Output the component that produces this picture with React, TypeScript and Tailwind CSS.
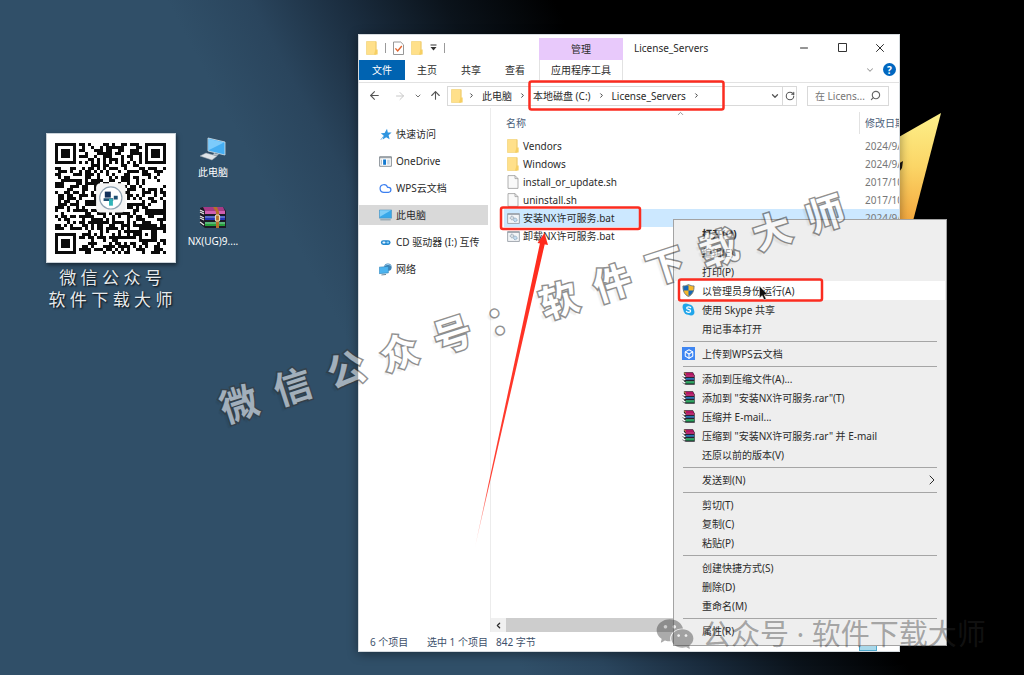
import type { ReactNode } from "react";
import {
  ArrowLeft, ArrowRight, ArrowUp, Box, ChevronDown, ChevronLeft,
  ChevronRight, ChevronUp, Cloud, Minus, RotateCw, Search, Square, X,
} from "lucide-react";
import { AiFillWechat } from "react-icons/ai";

const QR_SIZE = 37;

function inFinder(x: number, y: number, ox: number, oy: number) {
  return x >= ox - 1 && x <= ox + 7 && y >= oy - 1 && y <= oy + 7;
}

function ring(x: number, y: number, cx: number, cy: number) {
  return Math.max(Math.abs(x - cx), Math.abs(y - cy));
}

function isDark(x: number, y: number) {
  for (const [ox, oy] of [[0, 0], [30, 0], [0, 30]]) {
    if (inFinder(x, y, ox, oy)) {
      const r = ring(x, y, ox + 3, oy + 3);
      return r === 3 || r <= 1;
    }
  }
  const a = ring(x, y, 30, 30);
  if (a <= 2) return a !== 1;
  if (x === 6 || y === 6) return (x + y) % 2 === 0;
  let h = (x * 374761393 + y * 668265263 + 97) | 0;
  h = Math.imul(h ^ (h >>> 13), 1274126177);
  return ((h ^ (h >>> 16)) & 255) < 136;
}

function QrCode() {
  let d = "";
  for (let y = 0; y < QR_SIZE; y++)
    for (let x = 0; x < QR_SIZE; x++) if (isDark(x, y)) d += `M${x} ${y}h1v1h-1z`;
  return (
    <svg viewBox="0 0 37 37" className="w-[111px] h-[111px]" role="img" aria-label="二维码">
      <path d={d} fill="#0b0b0b" shapeRendering="crispEdges" />
      <rect x="13.7" y="13.4" width="9.8" height="9.8" rx="1.4" fill="#f4f4f4" />
      <circle cx="18.6" cy="18.3" r="3.7" fill="#fff" stroke="#8fa3b3" strokeWidth=".4" />
      <path d="M16.6 16.2h2v2h-2z" fill="#12305a" />
      <path d="M16.2 18.4h3.2v.9h-3.2zM19.6 17.6h1.3v1.2h-1.3z" fill="#1f4f73" />
      <path d="M18 18.6h1.3v2.3H18z" fill="#33b5b8" />
    </svg>
  );
}

function FolderIcon() {
  return (
    <svg viewBox="0 0 12 14" className="w-3 h-[14px] shrink-0">
      <path d="M.5.5h9.6v13H.5z" fill="#ffe08a" stroke="#f0cf6c" strokeWidth=".6" />
      <path d="M9.4 8.5h2.2v5H8z" fill="#f6cf63" />
      <path d="M10 .8v8" stroke="#e9c765" strokeWidth=".7" />
    </svg>
  );
}

function FileIcon() {
  return (
    <svg viewBox="0 0 12 14" className="w-3 h-[14px] shrink-0">
      <path d="M1 .6h7l3 3v9.8H1z" fill="#f9f9f9" stroke="#9c9c9c" strokeWidth=".8" />
      <path d="M8 .6v3h3" fill="none" stroke="#9c9c9c" strokeWidth=".8" />
    </svg>
  );
}

function BatIcon() {
  return (
    <svg viewBox="0 0 14 12" className="w-[13px] h-[11px] shrink-0">
      <path d="M.6.6h12.8v10.8H.6z" fill="#f3f5f7" stroke="#9098a0" strokeWidth=".9" />
      <path d="M.6 1.6h12.8" stroke="#9098a0" strokeWidth=".9" />
      <circle cx="5.4" cy="5.4" r="2" fill="#d6dde3" stroke="#8496a6" strokeDasharray="1 .5" />
      <circle cx="9" cy="7.6" r="1.9" fill="#c5ddf0" stroke="#7b9ab5" strokeDasharray="1 .5" />
    </svg>
  );
}

function CheckDocIcon() {
  return (
    <svg viewBox="0 0 11 14" className="w-[11px] h-[14px]">
      <path d="M.5 1h7.2l2.8 2.8v9.7H.5z" fill="#fff" stroke="#8b8b8b" strokeWidth=".9" />
      <path d="M2.4 7.4l2.3 2.5L8.8 5" fill="none" stroke="#e2632d" strokeWidth="1.4" />
    </svg>
  );
}

function StarIcon() {
  return (
    <svg viewBox="0 0 13 13" className="w-[13px] h-[13px]">
      <path d="M8 .8l.8 3.600 3.800.2-3 2.600 1 4-3.400-2-3.500 2.300.9-4-2.800-2.200 3.800-.4z" fill="#2f95e0" />
      <path d="M4.4 8.4l-2.6 3.4" stroke="#79b9e8" strokeWidth="1" />
    </svg>
  );
}

function OneDriveIcon() {
  return (
    <svg viewBox="0 0 14 12" className="w-[13px] h-[11px]">
      <path d="M.6.8h12.8v10.4H.6z" fill="#fff" stroke="#7d858c" />
      <path d="M.6 1.9h12.8" stroke="#7d858c" />
      <path d="M4.4 3.8h3.2v5.8H4.4z" fill="#1379cf" />
      <path d="M8.8 4h2.8v5.4H8.8z" fill="#c4d3df" />
      <path d="M2 4h1.2v5.4H2z" fill="#b9c4cc" />
    </svg>
  );
}

function MonitorIcon() {
  return (
    <svg viewBox="0 0 14 12" className="w-[13px] h-[12px]">
      <path d="M.4.6h13.2v8.8H.4z" fill="#38a8ea" stroke="#4a8fb8" strokeWidth=".6" />
      <path d="M1 1h12L1 8z" fill="#7fcdf7" />
      <path d="M1.4 11.2h11.2" stroke="#7690a0" strokeWidth="1" />
    </svg>
  );
}

function CdIcon() {
  return (
    <svg viewBox="0 0 14 12" className="w-[13px] h-[11px]">
      <rect x="2" y="3.6" width="10.5" height="5" rx="2.5" fill="#2187cf" />
      <rect x="3.6" y="5" width="3.4" height="2.2" rx="1.1" fill="#e8f5ff" />
      <rect x="8" y="5" width="3" height="2.2" rx="1.1" fill="#8fd0f8" />
    </svg>
  );
}

function NetworkIcon() {
  return (
    <svg viewBox="0 0 14 14" className="w-[14px] h-[14px]">
      <circle cx="9.6" cy="5" r="4" fill="#3f83b5" />
      <path d="M6.8 3.2c2-1.6 4-1.4 5.8.2" stroke="#a5d3ef" fill="none" />
      <path d="M.3 5l9.800-.8v7L.3 12z" fill="#4cb4f0" stroke="#2f7fb2" strokeWidth=".6" />
      <path d="M2.6 13.400l5-.5" stroke="#5d7a8e" strokeWidth="1" />
    </svg>
  );
}

function RarIcon() {
  return (
    <svg viewBox="0 0 14 14" className="w-[13px] h-[13px]">
      <path d="M2 .4h9.800l1.900 3.400v9.800H3.800L2 12z" fill="#26222c" />
      <path d="M2.400.8h9l1.400 2.400H4.200z" fill="#b31563" />
      <path d="M4 3.4h9.200v1.800H4z" fill="#d4307f" />
      <path d="M4 6.400h9.200v2H4z" fill="#2c74b5" />
      <path d="M4 10h9.200v2.400H4z" fill="#1d9b52" />
      <path d="M4 10.600h9.200" stroke="#7fe0a8" strokeWidth=".5" />
      <path d="M.6 3.400l3 1.800M.6 6.600l3 1.800M.6 10l3 2" stroke="#fff" strokeWidth="1.500" />
      <path d="M.4 4.800l2.600 1.500M.4 8l2.600 1.500M.4 11.400l2.600 1.700" stroke="#55555c" strokeWidth=".7" />
      <path d="M2.4 1l1.8 1.6" stroke="#e7c93a" strokeWidth="1" />
    </svg>
  );
}

function ShieldIcon() {
  return (
    <svg viewBox="0 0 14 14" className="w-[13px] h-[13px]">
      <path d="M7 .5c2 1.2 4 1.6 6 1.6 0 5.600-1.500 9.300-6 11.400C2.500 11.400 1 7.700 1 2.100c2 0 4-.4 6-1.600z" fill="#f6b828" stroke="#5f6e7c" strokeWidth=".9" />
      <path d="M7 1.300v5.700H1.600C1.400 5.400 1.400 4 1.400 2.500c2 0 3.800-.4 5.600-1.200zM7 7h5.200c-.8 2.700-2.300 4.700-5.200 6z" fill="#1767b8" />
    </svg>
  );
}

function SkypeIcon() {
  return (
    <svg viewBox="0 0 14 14" className="w-[13px] h-[13px]">
      <circle cx="7" cy="7" r="5.600" fill="#20a5ea" />
      <circle cx="4.200" cy="4.200" r="3.600" fill="#20a5ea" />
      <circle cx="9.800" cy="9.800" r="3.600" fill="#20a5ea" />
      <path d="M9.300 5C8.700 3.800 5 3.600 5 5.400 5 7.400 9.300 6.400 9.300 8.600 9.300 10.500 5.200 10.400 4.700 8.900" fill="none" stroke="#fff" strokeWidth="1.300" strokeLinecap="round" />
    </svg>
  );
}

function WpsBoxIcon() {
  return (
    <span className="flex items-center justify-center w-[13px] h-[13px] bg-[#3f86f2]">
      <Box size={10} color="#fff" strokeWidth={2.5} />
    </span>
  );
}

type MenuEntry = { label: string; icon?: ReactNode; bold?: boolean; active?: boolean; sub?: boolean };

const MENU_GROUPS: MenuEntry[][] = [
  [
    { label: "打开(O)", bold: true },
    { label: "编辑(E)" },
    { label: "打印(P)" },
    { label: "以管理员身份运行(A)", icon: <ShieldIcon />, active: true },
    { label: "使用 Skype 共享", icon: <SkypeIcon /> },
    { label: "用记事本打开" },
  ],
  [{ label: "上传到WPS云文档", icon: <WpsBoxIcon /> }],
  [
    { label: "添加到压缩文件(A)...", icon: <RarIcon /> },
    { label: '添加到 "安装NX许可服务.rar"(T)', icon: <RarIcon /> },
    { label: "压缩并 E-mail...", icon: <RarIcon /> },
    { label: '压缩到 "安装NX许可服务.rar" 并 E-mail', icon: <RarIcon /> },
    { label: "还原以前的版本(V)" },
  ],
  [{ label: "发送到(N)", sub: true }],
  [{ label: "剪切(T)" }, { label: "复制(C)" }, { label: "粘贴(P)" }],
  [{ label: "创建快捷方式(S)" }, { label: "删除(D)" }, { label: "重命名(M)" }],
  [{ label: "属性(R)" }],
];

const SIDEBAR = [
  { label: "快速访问", icon: <StarIcon /> },
  { label: "OneDrive", icon: <OneDriveIcon /> },
  { label: "WPS云文档", icon: <Cloud size={13} color="#3b7ff0" strokeWidth={2.2} /> },
  { label: "此电脑", icon: <MonitorIcon />, active: true },
  { label: "CD 驱动器 (I:) 互传", icon: <CdIcon /> },
  { label: "网络", icon: <NetworkIcon /> },
];

const FILES = [
  { name: "Vendors", date: "2024/9/10", icon: <FolderIcon /> },
  { name: "Windows", date: "2024/9/10", icon: <FolderIcon /> },
  { name: "install_or_update.sh", date: "2017/10/9", icon: <FileIcon /> },
  { name: "uninstall.sh", date: "2017/10/9", icon: <FileIcon /> },
  { name: "安装NX许可服务.bat", date: "2024/9/10", icon: <BatIcon />, selected: true },
  { name: "卸载NX许可服务.bat", date: "2024/9/10", icon: <BatIcon /> },
];

const CRUMBS = ["此电脑", "本地磁盘 (C:)", "License_Servers"];

function DesktopIcons() {
  return (
    <div className="flex flex-col items-center w-[58px] pt-1 text-[10px] leading-4 text-white [text-shadow:1px_1px_2px_#000]">
      <button className="flex flex-col items-center gap-[3px]">
        <svg viewBox="0 0 28 24" className="w-7 h-6">
          <path d="M9 1l17 4v13L9 14z" fill="#45aef2" stroke="#d6e2ea" strokeWidth=".8" />
          <path d="M10 2l15 3.600L10 13z" fill="#7ccbfb" />
          <path d="M1 19l6-3 11 3-5 4z" fill="#dfe4e8" stroke="#9aa5ad" strokeWidth=".5" />
          <path d="M15 16l5 1.500-2 1.200-4-1z" fill="#b8c2ca" />
        </svg>
        此电脑
      </button>
      <button className="flex flex-col items-center gap-1 mt-[26px]">
        <svg viewBox="0 0 28 23" className="w-7 h-[23px]">
          <path d="M1 2l3-1h20l3 4v17H6l-5-4z" fill="#1c1a26" />
          <path d="M4 1h20l2 4H6z" fill="#a53a86" />
          <path d="M6 5h20v3H6z" fill="#d05fb0" />
          <path d="M6 10h20v4H6z" fill="#2434b4" />
          <path d="M6 16h20v4H6z" fill="#27a03a" />
          <path d="M6 11h20M6 17h20" stroke="#b9d9f0" strokeWidth=".7" />
          <path d="M1 4l4 2M1 6l4 2M1 10l4 2M1 12l4 2M1 16l4 3" stroke="#e8e8e8" strokeWidth="1.200" />
          <path d="M14 1l3 5v16h3V6l-2-5z" fill="#b5712a" />
          <rect x="16.500" y="9" width="4" height="6" rx="1" fill="none" stroke="#e6dcc0" strokeWidth="1.200" />
        </svg>
        NX(UG)9....
      </button>
    </div>
  );
}

function TitleBar() {
  return (
    <header className="flex items-center h-[25px] shrink-0">
      <div className="flex items-center gap-[7px] w-[180px] pl-[7px] shrink-0">
        <FolderIcon />
        <span className="w-px h-[10px] bg-[#9a9a9a]" />
        <CheckDocIcon />
        <FolderIcon />
        <svg viewBox="0 0 7 7" className="w-[7px] h-[7px]">
          <path d="M.5 1h6" stroke="#333" />
          <path d="M.5 3h6l-3 3.500z" fill="#333" />
        </svg>
        <span className="w-px h-[10px] bg-[#9a9a9a]" />
      </div>
      <div className="flex items-center justify-center self-end w-[84px] h-[22px] bg-[#e8c9fb] shrink-0">管理</div>
      <h1 className="flex-1 pl-[11px]">License_Servers</h1>
      <button aria-label="最小化" className="flex justify-center w-[38px]"><Minus size={12} strokeWidth={2} /></button>
      <button aria-label="最大化" className="flex justify-center w-[38px]">
        <svg viewBox="0 0 9 9" className="w-[9px] h-[9px]">
          <path d="M.5.5h8v8h-8z" fill="none" stroke="#333" />
        </svg>
      </button>
      <button aria-label="关闭" className="flex justify-center w-[38px]"><X size={14} strokeWidth={1.7} /></button>
    </header>
  );
}

function RibbonTabs() {
  return (
    <nav className="flex items-center h-[23px] pb-[3px] border-b border-[#e2e2e2] shrink-0">
      <button className="w-[46px] h-5 bg-[#0063b1] text-white">文件</button>
      <button className="w-11 h-5">主页</button>
      <button className="w-11 h-5">共享</button>
      <button className="w-11 h-5">查看</button>
      <button className="w-[84px] h-5 ml-[2px] border-x border-[#e2e2e2]">应用程序工具</button>
      <button aria-label="展开功能区" className="ml-auto text-[#999]"><ChevronDown size={10} strokeWidth={2.500} /></button>
      <button
        aria-label="帮助"
        className="flex items-center justify-center w-[13px] h-[13px] ml-2 mr-[3px] rounded-full bg-[#0067c0] text-white font-bold"
      >
        ?
      </button>
    </nav>
  );
}

function AddressBar() {
  return (
    <div className="flex items-center h-[25px] pr-[10px] shrink-0">
      <div className="flex items-center justify-between w-[88px] pl-[9px] pr-[5px] shrink-0 text-[#555]">
        <div className="flex gap-[13px]">
          <button aria-label="后退"><ArrowLeft size={13} /></button>
          <button aria-label="前进" className="text-[#c8c8c8]"><ArrowRight size={12} /></button>
        </div>
        <div className="flex items-center gap-[7px]">
          <button aria-label="最近位置"><ChevronDown size={8} strokeWidth={2.500} /></button>
          <button aria-label="上移"><ArrowUp size={13} /></button>
        </div>
      </div>
      <div className="flex items-center flex-1 h-5 pl-[3px] border border-[#d9d9d9]">
        <FolderIcon />
        <ol className="flex items-center gap-[7px] pl-[5px] whitespace-nowrap">
          <li><ChevronRight size={7} strokeWidth={3} /></li>
          {CRUMBS.map((name) => (
            <li key={name} className="flex items-center gap-[7px]">
              <button>{name}</button>
              <ChevronRight size={7} strokeWidth={3} />
            </li>
          ))}
        </ol>
        <button aria-label="历史记录" className="ml-auto pr-[2px] text-[#555]"><ChevronDown size={10} strokeWidth={3} /></button>
        <button aria-label="刷新" className="flex items-center justify-center w-[14px] h-[18px] border-l border-[#d9d9d9] text-[#555]">
          <RotateCw size={10} strokeWidth={2.500} />
        </button>
      </div>
      <label className="flex items-center w-[82px] h-5 ml-[10px] px-[7px] border border-[#d9d9d9] shrink-0">
        <input aria-label="搜索" placeholder="在 Licens..." className="w-0 flex-1 outline-none placeholder:text-[#767676]" />
        <Search size={11} strokeWidth={2.500} className="-scale-x-100 text-[#666]" />
      </label>
    </div>
  );
}

function Sidebar() {
  return (
    <ul className="flex flex-col gap-[7px] w-[132px] pt-4 border-r border-[#ececec] shrink-0">
      {SIDEBAR.map(({ label, icon, active }) => (
        <li key={label} className={active ? "mr-[2px] bg-[#d9d9d9]" : "mr-[2px]"}>
          <a href="#" className="flex items-center gap-1 h-5 pl-5 whitespace-nowrap">
            <span className="flex justify-center w-[13px] shrink-0">{icon}</span>
            {label}
          </a>
        </li>
      ))}
    </ul>
  );
}

function FileList() {
  return (
    <div className="flex flex-col flex-1 min-w-0">
      <div className="flex-1 pl-[13px]">
        <table className="w-full table-fixed border-collapse text-left whitespace-nowrap">
          <thead>
            <tr className="h-[29px] text-[#4c607a]">
              <th className="relative pl-[2px] font-normal">
                名称
                <ChevronUp size={9} className="absolute top-px left-[172px] text-[#777]" />
              </th>
              <th className="w-[40px] font-normal overflow-hidden">
                <div className="h-[22px] pl-[5px] leading-[22px] border-l border-[#e2e2e2]">修改日期</div>
              </th>
            </tr>
          </thead>
          <tbody>
            {FILES.map(({ name, date, icon, selected }) => (
              <tr key={name} className={selected ? "h-[18px] bg-[#cce8ff]" : "h-[18px]"}>
                <td className="pl-[3px]">
                  <span className="flex items-center gap-1">
                    <span className="flex justify-center w-3 shrink-0">{icon}</span>
                    {name}
                  </span>
                </td>
                <td className="pl-[6px] overflow-hidden text-[#777]">{date}</td>
              </tr>
            ))}
          </tbody>
        </table>
      </div>
      <div className="flex h-[14px] bg-[#f0f0f0]">
        <button aria-label="向左滚动" className="flex items-center justify-center w-[15px]"><ChevronLeft size={9} strokeWidth={3.500} /></button>
        <div className="flex-1 bg-[#cdcdcd]" />
      </div>
    </div>
  );
}

function ExplorerWindow() {
  return (
    <section className="absolute left-[358px] right-[124px] top-[34px] bottom-[23px] flex flex-col overflow-hidden bg-white border border-[#d5dade] shadow-[0_2px_10px_rgba(0,0,0,0.4)]">
      <TitleBar />
      <RibbonTabs />
      <AddressBar />
      <div className="flex flex-1 min-h-0">
        <Sidebar />
        <FileList />
      </div>
      <footer className="flex items-center h-[19px] pl-[11px] text-[#3d506b] shrink-0">
        <span className="w-[57px]">6 个项目</span>
        <span className="w-[69px]">选中 1 个项目</span>
        <span>842 字节</span>
        <span className="self-end w-[18px] h-[6px] ml-auto mr-[22px] border border-[#4fa8cc] bg-[#a8d8ea]" />
      </footer>
    </section>
  );
}

function ContextMenu() {
  return (
    <div role="menu" className="absolute left-[673px] top-[219px] w-[274px] px-px pt-1 pb-[5px] bg-[#eeeeee] border border-[#a3a3a3]">
      {MENU_GROUPS.map((group, i) => (
        <div key={i}>
          {i > 0 && <hr className="mt-[3px] mb-[2px] mx-2 border-t border-[#a5a5a5]" />}
          {group.map(({ label, icon, bold, active, sub }) => (
            <button
              key={label}
              role="menuitem"
              className={`flex items-center w-full h-[19px] pl-[7px] pr-[5px] ${active ? "bg-white" : ""} ${bold ? "font-bold" : ""}`}
            >
              <span className="flex w-5 shrink-0">{icon}</span>
              {label}
              {sub && <ChevronRight size={16} strokeWidth={1.500} className="ml-auto" />}
            </button>
          ))}
        </div>
      ))}
    </div>
  );
}

function Annotations() {
  return (
    <svg className="absolute inset-0 w-full h-full pointer-events-none">
      <defs>
        <linearGradient id="tail" gradientUnits="userSpaceOnUse" x1="475" y1="546" x2="544" y2="236">
          <stop offset="0" stopColor="#ff2a1c" stopOpacity="0.200" />
          <stop offset="0.200" stopColor="#ff2a1c" stopOpacity="0.900" />
          <stop offset="1" stopColor="#ff2a1c" />
        </linearGradient>
      </defs>
      <g fill="none" stroke="#fb2c20" strokeWidth="2.500">
        <rect x="529.500" y="81.500" width="194" height="28" rx="2" />
        <rect x="501" y="207.500" width="139" height="21.500" rx="2" />
        <rect x="679" y="279.500" width="143" height="21" rx="2" />
      </g>
      <path d="M475 547L540 243h5z" fill="url(#tail)" />
      <path d="M537.500 243l7-10 3.500 12z" fill="#ff2a1c" />
      <path d="M759.500 286v12l2.700-2.400 1.900 4.200 2-.9-1.900-4.100 3.500-.2z" fill="#111" stroke="#eee" strokeWidth=".5" />
    </svg>
  );
}

function Watermarks() {
  return (
    <div className="pointer-events-none">
      <div
        aria-hidden
        className="absolute left-[196px] top-[278px] flex w-[672px] -rotate-[18deg] opacity-55 text-[38px] leading-[60px] font-bold text-white [-webkit-text-stroke:3px_#383838] [paint-order:stroke_fill] [text-shadow:-4px_2px_1px_rgba(0,0,0,0.1)]"
      >
        {[..."微信公众号：软件下载大师"].map((c) => (
          <span key={c} className="flex-1 text-center">{c}</span>
        ))}
      </div>
      <div className="absolute left-[654px] top-[613px] flex items-center gap-[6px] text-[#2c2c2c]/40 whitespace-nowrap">
        <AiFillWechat size={42} />
        <span className="text-[29px] leading-10">公众号 · 软件下载大师</span>
      </div>
    </div>
  );
}

export default function App() {
  return (
    <main className="relative min-h-screen overflow-hidden bg-[linear-gradient(62deg,#304f68_0%,#304f68_38%,#2a455d_44%,#1a2c3e_51%,#0b131b_58%,#000_66%)] font-['Noto_Sans','Noto_Sans_CJK_SC',sans-serif] text-[10px] leading-[14px] text-[#2b2b2b]">
      <div className="flex gap-2 pl-[45px] pt-[133px]">
        <div className="flex flex-col items-center w-[131px]">
          <div className="flex items-center justify-center w-[130px] h-[130px] bg-white border border-[#c9d2d9] shadow-[1px_2px_4px_rgba(0,0,0,0.5)]">
            <QrCode />
          </div>
          <p className="pt-1 text-center whitespace-nowrap text-[17px] leading-[22px] text-[#e6eaed] [text-shadow:1px_1px_2px_#000]">
            微 信 公 众 号
            <br />
            软 件 下 载 大 师
          </p>
        </div>
        <DesktopIcons />
      </div>
      <svg className="absolute inset-0 w-full h-full">
        <defs>
          <linearGradient id="gold" x1="0" y1="0" x2="0" y2="1">
            <stop offset="0" stopColor="#fdf08a" />
            <stop offset="0.500" stopColor="#fbd566" />
            <stop offset="1" stopColor="#f5a93f" />
          </linearGradient>
        </defs>
        <path d="M890 142l51-29-28 108h-23z" fill="url(#gold)" />
        <path d="M898 164l5-3-1 7-3 4z" fill="#1a1510" />
      </svg>
      <ExplorerWindow />
      <ContextMenu />
      <Annotations />
      <Watermarks />
    </main>
  );
}
